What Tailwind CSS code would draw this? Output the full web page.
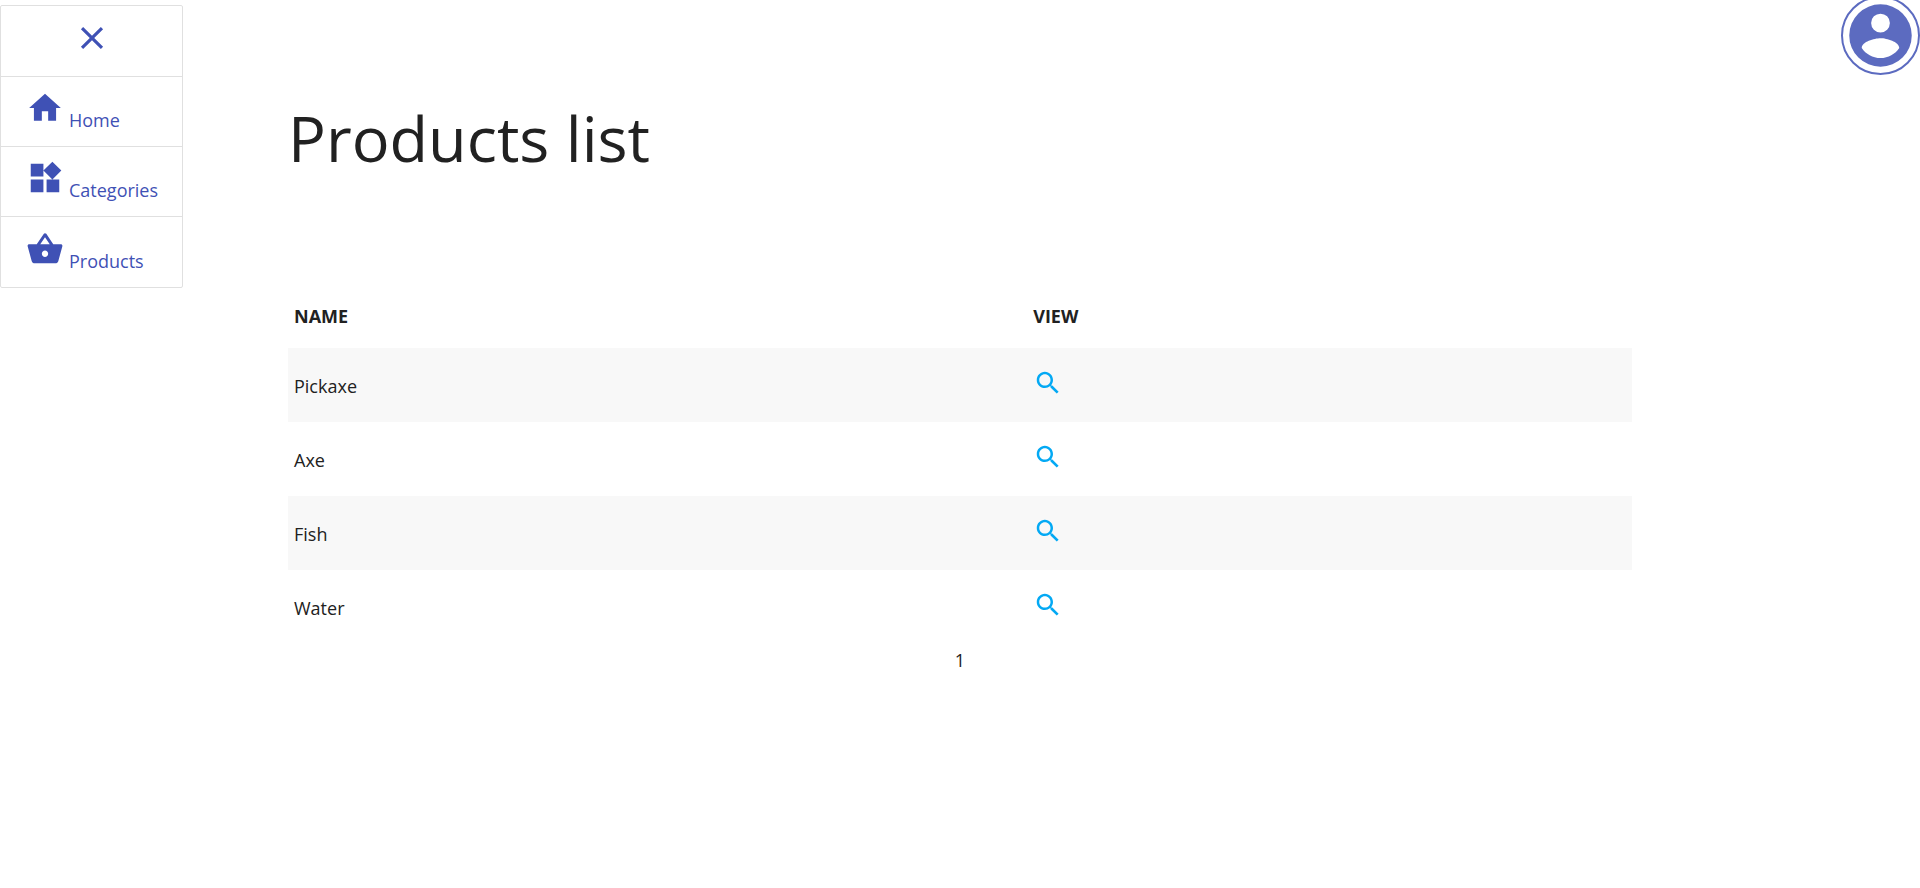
<!DOCTYPE html>
<html lang="en">
<head>
<meta charset="utf-8">
<title>Products list</title>
<script src="https://cdn.jsdelivr.net/npm/@tailwindcss/browser@4"></script>
</head>
<body class="min-h-screen bg-white font-['Open_Sans','Noto_Sans',sans-serif] text-lg leading-7 text-[#212121]">
<svg class="hidden">
  <symbol id="search" viewBox="0 0 24 24"><path d="M15.5 14h-.79l-.28-.27C15.41 12.59 16 11.11 16 9.5 16 5.91 13.09 3 9.5 3S3 5.91 3 9.5 5.91 16 9.5 16c1.61 0 3.09-.59 4.23-1.57l.27.28v.79l5 4.99L20.49 19l-4.99-5zm-6 0C7.01 14 5 11.99 5 9.5S7.01 5 9.5 5 14 7.01 14 9.5 11.99 14 9.5 14z"/></symbol>
</svg>
<nav class="fixed left-0 top-[5px] w-[183px] divide-y divide-[#e0e0e0] rounded-xs border border-[#e0e0e0] bg-white text-[#3f51b5]">
  <button type="button" aria-label="Close menu" class="flex h-[71px] w-full justify-center pt-[13px]">
    <svg class="size-[38px] fill-current" viewBox="0 0 24 24"><path d="M19 6.41 17.59 5 12 10.59 6.41 5 5 6.41 10.59 12 5 17.59 6.41 19 12 13.41 17.59 19 19 17.59 13.41 12z"/></svg>
  </button>
  <a href="#" class="flex h-[70px] gap-[5px] pl-[25px] pt-[12px]">
    <svg class="size-[38px] fill-current" viewBox="0 0 24 24"><path d="M10 20v-6h4v6h5v-8h3L12 3 2 12h3v8z"/></svg>
    <span class="pt-[17px]">Home</span>
  </a>
  <a href="#" class="flex h-[70px] gap-[5px] pl-[25px] pt-[12px]">
    <svg class="size-[38px] fill-current" viewBox="0 0 24 24"><path d="M13 13v8h8v-8h-8zM3 21h8v-8H3v8zM3 3v8h8V3H3zm13.66-1.31L11 7.34 16.66 13l5.66-5.66-5.66-5.65z"/></svg>
    <span class="pt-[17px]">Categories</span>
  </a>
  <a href="#" class="flex h-[70px] gap-[5px] pl-[25px] pt-[13px]">
    <svg class="size-[38px] fill-current" viewBox="0 0 24 24"><path d="M17.21 9l-4.38-6.56c-.19-.28-.51-.42-.83-.42-.32 0-.64.14-.83.43L6.79 9H2c-.55 0-1 .45-1 1 0 .09.01.18.04.27l2.54 9.27c.23.84 1 1.46 1.92 1.46h13c.92 0 1.69-.62 1.93-1.46l2.54-9.27L23 10c0-.55-.45-1-1-1h-4.79zM9 9l3-4.4L15 9H9zm3 8c-1.1 0-2-.9-2-2s.9-2 2-2 2 .9 2 2-.9 2-2 2z"/></svg>
    <span class="pt-[17px]">Products</span>
  </a>
</nav>
<button type="button" aria-label="Account" class="fixed -top-1 right-0 flex size-[79px] items-center justify-center rounded-full border-2 border-[#5c6bc0] text-[#5c6bc0]">
  <svg class="size-[75px] shrink-0 fill-current" viewBox="0 0 24 24"><path fill-rule="evenodd" d="M12 2a10 10 0 1 0 0 20 10 10 0 0 0 0-20zm0 3a3 3 0 1 1 0 6 3 3 0 0 1 0-6zm0 14.2c-2.5 0-4.710-1.28-6-3.220.03-1.990 4-3.080 6-3.080s5.970 1.090 6 3.080c-1.290 1.940-3.500 3.220-6 3.220z"/></svg>
</button>
<main class="mx-auto w-7/10 pt-[101px]">
  <h1 class="text-[63px] leading-[74px]">Products list</h1>
  <table class="mt-[109px] w-full table-fixed border-collapse text-left">
    <thead>
      <tr class="h-16"><th class="w-[55%] px-[6px] font-bold">NAME</th><th class="px-[6px] font-bold">VIEW</th></tr>
    </thead>
    <tbody>
      <tr class="h-[74px] bg-[#f8f8f8]"><td class="px-[6px] pt-[2px]">Pickaxe</td><td class="px-[6px] pb-[6px]"><a href="#" aria-label="View Pickaxe" class="inline-block align-middle text-[#03a9f4]"><svg class="size-[30px] fill-current"><use href="#search"/></svg></a></td></tr>
      <tr class="h-[74px]"><td class="px-[6px] pt-[2px]">Axe</td><td class="px-[6px] pb-[6px]"><a href="#" aria-label="View Axe" class="inline-block align-middle text-[#03a9f4]"><svg class="size-[30px] fill-current"><use href="#search"/></svg></a></td></tr>
      <tr class="h-[74px] bg-[#f8f8f8]"><td class="px-[6px] pt-[2px]">Fish</td><td class="px-[6px] pb-[6px]"><a href="#" aria-label="View Fish" class="inline-block align-middle text-[#03a9f4]"><svg class="size-[30px] fill-current"><use href="#search"/></svg></a></td></tr>
      <tr class="h-[74px]"><td class="px-[6px] pt-[2px]">Water</td><td class="px-[6px] pb-[6px]"><a href="#" aria-label="View Water" class="inline-block align-middle text-[#03a9f4]"><svg class="size-[30px] fill-current"><use href="#search"/></svg></a></td></tr>
    </tbody>
  </table>
  <p class="pt-[2px] text-center">1</p>
</main>
</body>
</html>
